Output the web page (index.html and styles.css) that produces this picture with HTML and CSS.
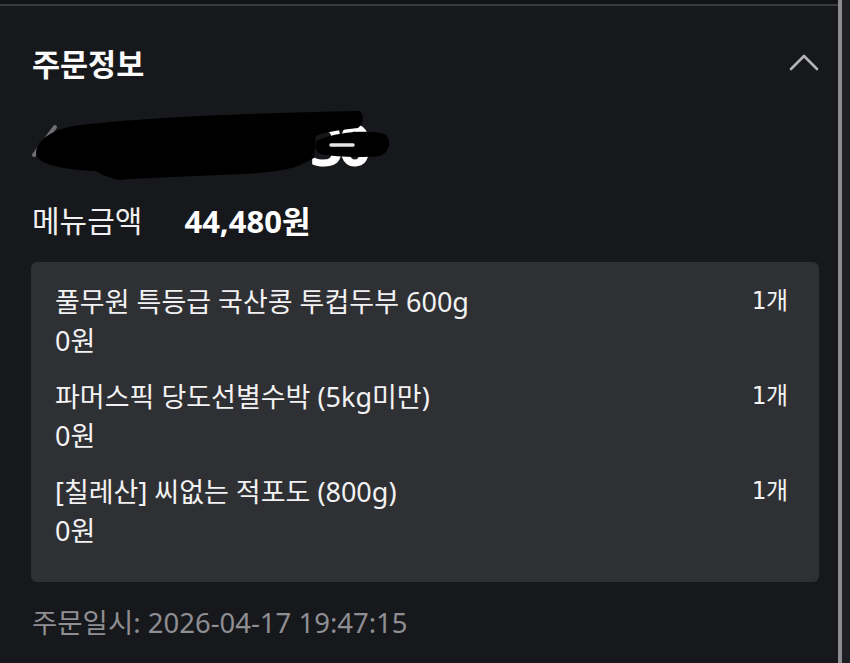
FILE: index.html
```html
<!DOCTYPE html>
<html lang="ko">
<head>
<meta charset="utf-8">
<link rel="stylesheet" href="styles.css">
</head>
<body>
<div class="page">
  <div class="main">
    <div class="topbar"></div>
    <div class="content">
      <div class="header">
        <h1 class="title">주문정보</h1>
        <svg class="chevron" width="30" height="18" viewBox="0 0 30 18"><polyline points="2,16 15,3 28,16" fill="none" stroke="#b5b5b8" stroke-width="2.6" stroke-linecap="round" stroke-linejoin="round"/></svg>
      </div>
      <div class="masked">
        <span class="masked-text">30</span>
        <svg class="scribble" width="380" height="109" viewBox="31 84 380 109">
          <path d="M34,155 L55,127" stroke="#6e6f73" stroke-width="4" stroke-linecap="round"/>
          <path d="M36,152 C38,138 55,128 80,125 C150,117 250,113 360,111 C364,115 364,124 358,128 C340,130 325,132 316,136 L314,158 C300,166 290,172 240,174 C200,176 140,178 118,180 C105,177 100,173 95,171 C60,169 35,164 36,152 Z" fill="#000"/>
          <path d="M318,140 C340,131 370,130 385,134 C392,140 390,152 380,156 C360,158 335,157 320,154 C314,150 314,144 318,140 Z" fill="#000"/>
          <path d="M331,145 L353,145" stroke="#e6e6e6" stroke-width="3.5" stroke-linecap="round"/>
        </svg>
      </div>
      <div class="menu-row">
        <span class="menu-label">메뉴금액</span>
        <span class="menu-amount">44,480원</span>
      </div>
      <div class="items">
        <div class="item">
          <div class="item-info">
            <div class="item-name">풀무원 특등급 국산콩 투컵두부 600g</div>
            <div class="item-price">0원</div>
          </div>
          <div class="item-qty">1개</div>
        </div>
        <div class="item">
          <div class="item-info">
            <div class="item-name">파머스픽 당도선별수박 (5kg미만)</div>
            <div class="item-price">0원</div>
          </div>
          <div class="item-qty">1개</div>
        </div>
        <div class="item">
          <div class="item-info">
            <div class="item-name">[칠레산] 씨없는 적포도 (800g)</div>
            <div class="item-price">0원</div>
          </div>
          <div class="item-qty">1개</div>
        </div>
      </div>
      <div class="date">주문일시: 2026-04-17 19:47:15</div>
    </div>
  </div>
  <div class="rail"></div>
</div>
</body>
</html>
```

FILE: styles.css
```css
* { box-sizing: border-box; }
html, body { margin: 0; padding: 0; }
body {
  background: #17181b;
  font-family: "Noto Sans", "Noto Sans CJK KR", sans-serif;
  color: #f2f2f3;
  width: 850px;
  height: 663px;
  overflow: hidden;
}
.page {
  display: flex;
  height: 663px;
}
.main {
  flex: 1;
  display: flex;
  flex-direction: column;
}
.topbar {
  height: 6px;
  background: #121316;
  border-bottom: 2px solid #3a3b3f;
}
.rail {
  width: 12px;
  background: #1e1f22;
  border-left: 4px solid #8d8d90;
}
.content {
  padding: 0 19px 0 31px;
}
.header {
  margin-top: 38px;
  height: 40px;
  display: flex;
  align-items: center;
  justify-content: space-between;
}
.title {
  margin: 0 0 0 1px;
  font-size: 30.5px;
  font-weight: 700;
  line-height: 40px;
  color: #fafafa;
}
.chevron {
  margin-top: -4px;
}
.masked {
  position: relative;
  height: 109px;
}
.masked-text {
  position: absolute;
  left: 279px;
  top: 31px;
  font-size: 58px;
  font-weight: 700;
  line-height: 1;
  letter-spacing: -5px;
  color: #fff;
}
.scribble {
  position: absolute;
  left: 0;
  top: 0;
}
.menu-row {
  margin-top: 8px;
  height: 36px;
  display: flex;
  align-items: center;
  gap: 42px;
  padding-left: 1px;
}
.menu-label {
  font-size: 30px;
  color: #f0f0f0;
}
.menu-amount {
  font-size: 31px;
  font-weight: 700;
  color: #fff;
}
.items {
  margin-top: 25px;
  background: #2f3034;
  border-radius: 6px;
  padding: 20px 31px 16px 24px;
  display: flex;
  flex-direction: column;
  gap: 17px;
  height: 320px;
}
.item {
  display: flex;
  justify-content: space-between;
  align-items: flex-start;
}
.item-name, .item-price {
  font-size: 27px;
  line-height: 39px;
  color: #f2f2f3;
}
.item-qty {
  font-family: "DejaVu Sans Mono", "Noto Sans CJK KR", monospace;
  font-size: 24px;
  line-height: 39px;
  color: #f2f2f3;
}
.date {
  margin-top: 24px;
  font-size: 27.5px;
  line-height: 34px;
  color: #8e8e93;
  padding-left: 1px;
}
```
